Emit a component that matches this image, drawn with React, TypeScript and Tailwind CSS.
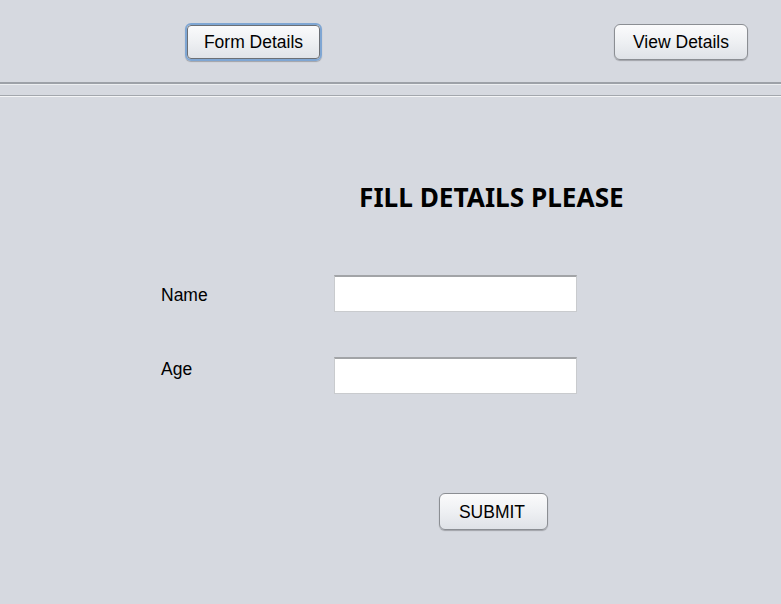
import React from "react";

function Btn({ children, focused, className }: { children: React.ReactNode; focused?: boolean; className?: string }) {
  return (
    <button
      className={
        "flex items-center justify-center rounded-[6px] bg-gradient-to-b from-[#fbfbfc] via-[#eef0f3] to-[#dfe2e7] text-[17.5px] text-black shadow-[0_1px_1px_rgba(0,0,0,0.25)] " +
        (focused
          ? "border-2 border-[#7fa6d3] outline outline-1 outline-[#6b6f75] -outline-offset-[3px] "
          : "border border-[#8b8e93] ") +
        (className ?? "")
      }
      style={{ fontFamily: '"Liberation Sans", Arial, sans-serif' }}
    >
      {children}
    </button>
  );
}

export default function App() {
  return (
    <div className="w-[781px] h-[604px] bg-[#d6d9e0] flex flex-col" style={{ fontFamily: '"Liberation Sans", Arial, sans-serif' }}>
      <div className="h-[82px] flex items-start pt-[23px] pl-[185px] pr-[33px]">
        <Btn focused className="w-[137px] h-[38px] pt-[1px]">Form Details</Btn>
        <div className="ml-auto pt-[1px]">
          <Btn className="w-[134px] h-[36px] pt-[1px]">View Details</Btn>
        </div>
      </div>
      <div className="h-[2px] bg-[#9da1a8]" />
      <div className="h-[1px] bg-[#eceef1]" />
      <div className="h-[10px]" />
      <div className="h-[1px] bg-[#a3a7ad]" />
      <div className="h-[1px] bg-[#f4f5f7]" />
      <div className="pl-[359px] pt-[85px]">
        <h1 className="text-[26.2px] font-bold leading-[30px] text-black" style={{ fontFamily: '"Noto Sans", "Open Sans", sans-serif' }}>
          FILL DETAILS PLEASE
        </h1>
      </div>
      <div className="pl-[161px] pt-[63px] flex flex-col gap-[45px]">
        <div className="flex items-center">
          <span className="w-[173px] text-[17.5px] text-black pt-[3px]">Name</span>
          <input className="w-[243px] h-[37px] bg-white border border-[#c9cbce] border-t-2 border-t-[#a2a4a7] outline-none" />
        </div>
        <div className="flex items-start">
          <span className="w-[173px] text-[17.5px] text-black -mt-[1px]">Age</span>
          <input className="w-[243px] h-[37px] bg-white border border-[#c9cbce] border-t-2 border-t-[#a2a4a7] outline-none" />
        </div>
      </div>
      <div className="pl-[439px] pt-[99px]">
        <Btn className="w-[109px] h-[37px] pt-[2px] pr-[3px]">SUBMIT</Btn>
      </div>
    </div>
  );
}
